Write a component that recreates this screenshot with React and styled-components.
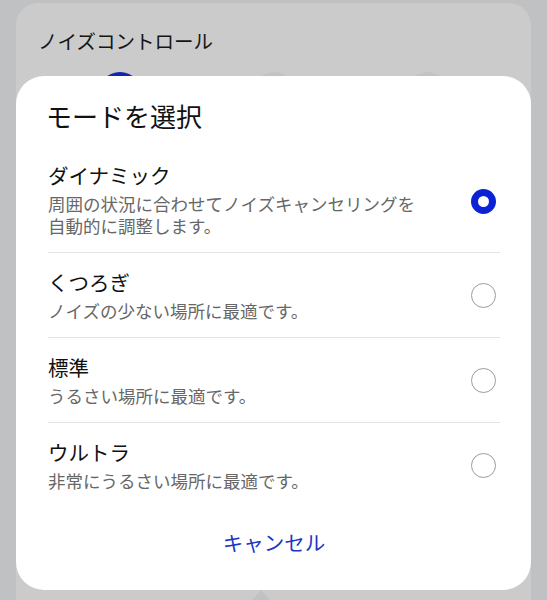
import React from 'react';
import styled, { createGlobalStyle } from 'styled-components';

const Global = createGlobalStyle`
  html, body { margin: 0; padding: 0; background: #c0c1c3; }
  body { font-family: "Noto Sans CJK JP", "Noto Sans", sans-serif; }
  * { box-sizing: border-box; }
`;

const Screen = styled.div`
  position: relative;
  width: 547px;
  height: 600px;
  overflow: hidden;
  background: #c0c1c3;
  padding: 3px 16px 0 16px;
  display: flex;
  flex-direction: column;
`;

const BackCard = styled.section`
  background: #cbcbcb;
  border-radius: 22px 22px 0 0;
  height: 587px;
  padding: 25px 22px 0;
  flex-shrink: 0;
`;

const BackTitle = styled.div`
  font-size: 19.5px;
  line-height: 26px;
  color: #151515;
`;

const CircleRow = styled.div`
  display: flex;
  justify-content: center;
  gap: 110px;
  margin-top: 18px;
`;

const ModeCircle = styled.div`
  width: 44px;
  height: 44px;
  border-radius: 50%;
  background: ${p => (p.$active ? '#1424b0' : '#c3c3c4')};
`;

const BottomRow = styled.div`
  display: flex;
  height: 14px;
  flex-shrink: 0;
`;

const BottomCard = styled.div`
  flex: ${p => (p.$side === 'left' ? '0 0 245px' : '1')};
  background: #cbcbcb;
  clip-path: ${p =>
    p.$side === 'left'
      ? 'polygon(0 0, 100% 0, calc(100% - 12px) 100%, 0 100%)'
      : 'polygon(0 0, 100% 0, 100% 100%, 12px 100%)'};
`;

const Dialog = styled.div`
  position: absolute;
  left: 16px;
  top: 76px;
  width: 515px;
  height: 514px;
  background: #ffffff;
  border-radius: 28px;
  padding: 23px 31px 0 32px;
  display: flex;
  flex-direction: column;
`;

const DialogTitle = styled.h2`
  margin: 0 0 13px -2px;
  font-size: 26px;
  line-height: 34px;
  font-weight: 400;
  color: #111111;
`;

const List = styled.div`
  display: flex;
  flex-direction: column;
`;

const Option = styled.div`
  display: flex;
  align-items: center;
  padding: 16px 0 15px;
  border-bottom: ${p => (p.$last ? 'none' : '1px solid #e4e4e4')};
`;

const OptionText = styled.div`
  flex: 1;
  display: flex;
  flex-direction: column;
  gap: 5px;
`;

const OptionTitle = styled.div`
  font-size: 20.5px;
  line-height: 26px;
  color: #111111;
`;

const OptionDesc = styled.div`
  font-size: 17.5px;
  line-height: 22px;
  color: #676767;
`;

const Radio = styled.span`
  width: 25px;
  height: 25px;
  border-radius: 50%;
  margin-right: 4px;
  margin-top: ${p => (p.$checked ? '4px' : '0')};
  flex-shrink: 0;
  background: #fff;
  border: ${p => (p.$checked ? '7px solid #0b23d4' : '1.5px solid #9c9c9c')};
`;

const Footer = styled.div`
  display: flex;
  justify-content: center;
  padding: 22px 0 34px;
`;

const CancelButton = styled.button`
  border: none;
  background: none;
  padding: 0;
  font-family: inherit;
  font-size: 20.5px;
  line-height: 26px;
  color: #1a36c6;
  cursor: pointer;
`;

const options = [
  {
    title: 'ダイナミック',
    desc: ['周囲の状況に合わせてノイズキャンセリングを', '自動的に調整します。'],
    checked: true,
  },
  { title: 'くつろぎ', desc: ['ノイズの少ない場所に最適です。'] },
  { title: '標準', desc: ['うるさい場所に最適です。'] },
  { title: 'ウルトラ', desc: ['非常にうるさい場所に最適です。'] },
];

export default function App() {
  return (
    <>
      <Global />
      <Screen>
        <BackCard>
          <BackTitle>ノイズコントロール</BackTitle>
          <CircleRow>
            <ModeCircle $active />
            <ModeCircle />
            <ModeCircle />
          </CircleRow>
        </BackCard>
        <BottomRow>
          <BottomCard $side="left" />
          <BottomCard $side="right" />
        </BottomRow>
        <Dialog>
          <DialogTitle>モードを選択</DialogTitle>
          <List>
            {options.map((o, i) => (
              <Option key={o.title} $last={i === options.length - 1}>
                <OptionText>
                  <OptionTitle>{o.title}</OptionTitle>
                  <OptionDesc>
                    {o.desc.map((line, j) => (
                      <React.Fragment key={j}>
                        {j > 0 && <br />}
                        {line}
                      </React.Fragment>
                    ))}
                  </OptionDesc>
                </OptionText>
                <Radio $checked={!!o.checked} />
              </Option>
            ))}
          </List>
          <Footer>
            <CancelButton>キャンセル</CancelButton>
          </Footer>
        </Dialog>
      </Screen>
    </>
  );
}
